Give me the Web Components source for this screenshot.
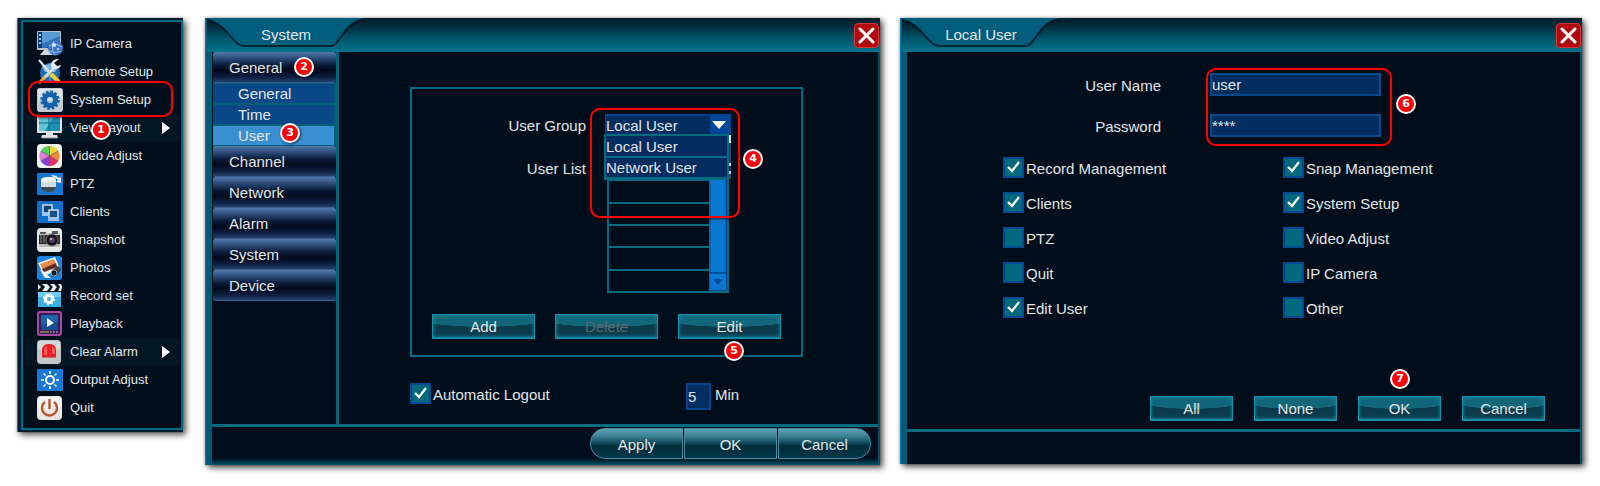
<!DOCTYPE html>
<html lang="en">
<head>
<meta charset="utf-8">
<title>DVR user setup guide</title>
<style>
  body { margin: 0; background: #fff; font-family: "Liberation Sans", Arial, sans-serif; font-size: 15px; line-height: 18px; color: #e4e6e8; }
</style>
</head>
<body>
<guide-page></guide-page>

<script>
const define = (name, html, setup) => {
  const template = document.createElement('template');
  template.innerHTML = html;
  customElements.define(name, class extends HTMLElement {
    constructor() {
      super();
      this.attachShadow({ mode: 'open' }).append(template.content.cloneNode(true));
    }
    connectedCallback() {
      if (setup && !this.ready) { this.ready = true; setup(this, this.shadowRoot); }
    }
  });
};
const base = '*{box-sizing:border-box} button,input,select{font:inherit;color:inherit;margin:0}';

/* Numbered step marker */
define('step-badge', `<style>${base}
  :host{position:absolute;z-index:5;display:grid;place-items:center;box-sizing:border-box;width:20px;height:20px;border:2px solid #fff;border-radius:50%;background:#fb0007;color:#fff;font:bold 11px/16px "DejaVu Sans",sans-serif;box-shadow:1px 1px 3px rgba(0,0,0,.7);pointer-events:none}
</style><slot></slot>`);

/* Red outline round a highlighted area */
define('focus-frame', `<style>
  :host{position:absolute;z-index:4;box-sizing:border-box;border:2px solid #ff0000;border-radius:10px;box-shadow:0 0 1px #f00,0 1px 3px rgba(0,0,0,.6);pointer-events:none}
</style>`);

const icons = {
  camera: `<rect x="0" y="0" width="24" height="19" rx="1" fill="#b9c3cc"/><rect x="1" y="1" width="22" height="16" fill="#0b3a6c"/><path d="M5 1h18v9L9 17H5z" fill="#2e74b8"/><path d="M5 1h18v4L7 12H5z" fill="#5b9bd2"/><path d="M2 3h2v2H2zM2 7h2v2H2zM2 11h2v2H2z" fill="#7fd1ff"/><path d="M7 19h10l2 5H3z" fill="#cfd6dc"/><circle cx="18.500" cy="17" r="7.500" fill="#3e74c4"/><path d="M12 15q6-4 13 1M12 20q7 3 12 0M17 10q-4 7 1 14" fill="none" stroke="#8fbdf2"/><circle cx="17" cy="14" r="2" fill="#cfe8ff"/><circle cx="21" cy="18" r="1" fill="#d8ecff"/>`,
  tools: `<circle cx="13" cy="14" r="10" fill="#1f6cae"/><path d="M5 8q8-6 16 0l-3 5H8z" fill="#7fb9e2"/><path d="M5 20q8-6 16 0M13 4v20" fill="none" stroke="#62b5ea"/><path d="M2 1l11 13" stroke="#e8edf0" stroke-width="2"/><path d="M14 15l8 8" stroke="#f3cf35" stroke-width="4"/><path d="M6 20L18 8" stroke="#d3dbe0" stroke-width="3"/><path d="M22 0q-7 0-8 5q0 5 4 5q5 0 6-4l-4 1-3-3z" fill="#e9eef2"/><path d="M2 24l6-6" stroke="#e7ac2a" stroke-width="3"/>`,
  gear: `<rect x="0" y="1" width="26" height="24" rx="3" fill="#c6cdd2"/><rect x="1" y="2" width="24" height="11" rx="2" fill="#dde2e5"/><circle cx="13" cy="13" r="5.500" fill="none" stroke="#1364ad" stroke-width="5"/><circle cx="13" cy="13" r="8.500" fill="none" stroke="#1364ad" stroke-width="2.500" stroke-dasharray="2.700 1.750"/>`,
  monitor: `<rect x="0" y="0" width="25" height="18" rx="1" fill="#dfe6ea"/><rect x="2" y="2" width="21" height="14" fill="#1f8fb0"/><path d="M2 2h14L8 16H2z" fill="#5fc4d8"/><path d="M12 2v14M2 8h21" stroke="#156a90"/><path d="M9 18h7v2h4l1 3H4l1-3h4z" fill="#e2e5e7"/><path d="M5 23h15" stroke="#8d969c"/>`,
  wheel: `<rect x="0" y="1" width="25" height="24" rx="4" fill="#f0f0ee"/><g transform="translate(12.500 13)"><path d="M0 0L0-10A10 10 0 0 1 8.700-5z" fill="#f0d13e"/><path d="M0 0L8.700-5A10 10 0 0 1 8.700 5z" fill="#f08a3a"/><path d="M0 0L8.700 5A10 10 0 0 1 0 10z" fill="#e0345e"/><path d="M0 0L0 10A10 10 0 0 1-8.700 5z" fill="#8a3fd0"/><path d="M0 0L-8.700 5A10 10 0 0 1-8.700-5z" fill="#e37bd6"/><path d="M0 0L-8.700-5A10 10 0 0 1 0-10z" fill="#52d455"/><path d="M0-10V10M-8.700-5L8.700 5M-8.700 5L8.700-5" stroke="#444" stroke-width=".6"/></g>`,
  dome: `<rect x="0" y="2" width="26" height="22" rx="1" fill="#1777d2"/><path d="M4 9q1-3 6-3h5q4 1 4 3v2H4z" fill="#f5f7f8"/><path d="M4 11h15v5H4z" fill="#d8dde1"/><path d="M4 16h15q-1 5-7.500 5T4 16z" fill="#3b4a58"/><path d="M14 4q5 0 8 3l2-1v6l-5-1 2-2q-2-2-5-3z" fill="#eef5fb"/>`,
  clients: `<rect x="0" y="2" width="26" height="22" rx="1" fill="#126dc6"/><g stroke="#e6f1fa" stroke-width="1.300"><rect x="6" y="6" width="9" height="8" fill="#12406f"/><path d="M5 16h6"/><rect x="12" y="11" width="9" height="8" fill="#194f86"/><path d="M11 21h11"/></g>`,
  photo: `<rect x="0" y="1" width="25" height="24" rx="4" fill="#e9e9e7"/><path d="M2 6h21v4H2z" fill="#c6c7c6"/><path d="M3 5h6v2H3zM15 4h6v3h-6z" fill="#55585a"/><path d="M2 8h21v9H2z" fill="#26282b"/><path d="M4 8v8M7 8v8" stroke="#8c8e90"/><path d="M2 17h21v3H2z" fill="#bcbcbb"/><circle cx="15" cy="13" r="6" fill="#111" stroke="#777"/><circle cx="15" cy="13" r="3" fill="#5b3b6b"/><circle cx="14" cy="12" r="1" fill="#ddd"/>`,
  pictures: `<rect x="0" y="1" width="25" height="24" rx="3" fill="#1b82dd"/><path d="M1 8L18 2l5 12L7 21z" fill="#f2f5f7"/><path d="M3 9l14-5 3 8L7 17z" fill="#e98a4a"/><path d="M5 14l14-6 1 4L7 17z" fill="#5d2a25"/><path d="M3 15l5 8h6l-8-7z" fill="#eef1f3"/><path d="M15 15l6-4 3 3-4 7-6 1z" fill="#3b3f45"/><circle cx="17" cy="18" r="3" fill="#15181c" stroke="#9aa"/>`,
  record: `<rect x="1" y="9" width="23" height="15" rx="1" fill="#39b1e4"/><path d="M1 9h23v5H1z" fill="#6bcbf0"/><rect x="1" y="1" width="24" height="7" fill="#0b1219"/><path d="M5 1h5l3 3-3 4H5l3-4zM13 1h4l3 3-3 4h-4l3-4zM21 1h3l1 3-1 4h-3l2-4zM1 1l3 3-3 3z" fill="#eef2f4"/><circle cx="12" cy="16" r="3.500" fill="none" stroke="#fff" stroke-width="3"/><circle cx="12" cy="16" r="5.200" fill="none" stroke="#fff" stroke-width="1.500" stroke-dasharray="2 2.080"/>`,
  play: `<rect x="1" y="1" width="23" height="23" rx="2" fill="#3a1c55" stroke="#a84a9f" stroke-width="2"/><rect x="4" y="4" width="17" height="15" fill="#134e96"/><path d="M4 4h17v6L4 14z" fill="#1d63ae"/><path d="M10 7l7 5-7 4z" fill="#fff"/><path d="M3 21h9" stroke="#b8c837"/><path d="M13 21h9" stroke="#c7b6d6" stroke-dasharray="2 1"/>`,
  alarm: `<rect x="0" y="1" width="24" height="24" rx="4" fill="#c4c5c7"/><rect x="1" y="2" width="22" height="9" rx="3" fill="#d6d7d8"/><path d="M5 18v-8q1-5 7-5t7 5v8z" fill="#f01c26"/><path d="M7 16v-5q1-3 3-4v9zM15 7q3 1 3 4v4h-3z" fill="#ff5a5e"/><path d="M5 18h14" stroke="#c22"/>`,
  sun: `<rect x="0" y="2" width="26" height="22" rx="1" fill="#1878d4"/><circle cx="13" cy="13" r="4" fill="none" stroke="#fff" stroke-width="2"/><path d="M13 4v3M13 19v3M4 13h3M19 13h3M6.500 6.500l2 2M17.500 17.500l2 2M6.500 19.500l2-2M17.500 8.500l2-2" stroke="#fff" stroke-width="1.600"/>`,
  power: `<rect x="0" y="1" width="25" height="24" rx="4" fill="#e9e7e5"/><rect x="1" y="2" width="23" height="11" rx="3" fill="#f5f4f3"/><path d="M8 7A7.500 7.500 0 1 0 17 7" fill="none" stroke="#b9552c" stroke-width="2.400"/><path d="M12.500 4v10" stroke="#b9552c" stroke-width="2.400"/>`
};

define('menu-entry', `<style>${base}
  :host{display:block;position:relative}
  button{display:flex;align-items:center;width:100%;height:28px;padding:0 9px 0 12px;border:0;background:none;text-align:left;font-size:13px;line-height:16px}
  :host([submenu]) button{background:#001625}
  .icon{flex:none;width:26px;height:26px;margin-right:7px}
  .text{flex:1;white-space:nowrap}
  .arrow{display:none;width:8px;height:12px}
  :host([submenu]) .arrow{display:block}
</style>
<button type="button"><svg class="icon" viewBox="0 0 26 26" aria-hidden="true"></svg><span class="text"><slot></slot></span><svg class="arrow" viewBox="0 0 8 12"><path d="M0 0l8 6-8 6z" fill="#fff"/></svg></button><slot name="mark"></slot>`,
(host, root) => { root.querySelector('.icon').innerHTML = icons[host.getAttribute('icon')]; });

define('setup-menu', `<style>${base}
  :host{display:block;padding:2px 0 2px 3px;background:#001d33;border-left:1px solid #0873b5;box-sizing:border-box;box-shadow:3px 3px 6px rgba(0,0,0,.65),0 0 2px #bbb}
  nav{border:2px solid #006a80;padding:8px 2px 6px 2px;background:#000e1c}
</style><nav aria-label="Main menu"><slot></slot></nav>`);

/* Framed window: title tab, close button, body and footer */
define('nvr-window', `<style>${base}
  :host{display:block;box-sizing:border-box;background:#000e1c;border-left:1px solid #0874b0;box-shadow:3px 3px 6px rgba(0,0,0,.65),0 0 3px #aaa}
  .shell{border-left:6px solid #005c76;border-right:2px solid #004f66}
  header{position:relative;display:flex;justify-content:space-between;align-items:center;height:34px;margin:0 -2px 0 -5px;background:linear-gradient(#001d2b 0,#002d3d 25%,#005a70 65%,#00728a 100%)}
  .tab{position:relative;width:158px;height:34px}
  .tab svg{display:block;width:158px;height:34px}
  h2{position:absolute;inset:8px 0 auto 0;margin:0;font-size:15px;line-height:18px;font-weight:400;text-align:center}
  .close{display:grid;place-items:center;width:25px;height:25px;margin-right:1px;padding:0;border:1px solid #d8343c;border-radius:4px;background:#b00a10}
  footer{border-top:3px solid #006c82}
</style>
<div class="shell">
<header><div class="tab"><svg viewBox="0 0 158 34" aria-hidden="true"><path d="M0 3C20 5 26 28 37 28H124C133 28 137 4 158 2" fill="none" stroke="#001822" stroke-width="2" opacity=".8"/><path d="M0 0V1C20 4 26 26 36 26H124C132 26 136 3 158 0z" fill="#005d7c"/></svg><h2></h2></div>
<button class="close" type="button" aria-label="Close"><svg width="17" height="17" viewBox="0 0 17 17"><path d="M2 2l13 13M15 2L2 15" stroke="#fff" stroke-width="3" stroke-linecap="round"/></svg></button></header>
<slot></slot><footer><slot name="footer"></slot></footer></div>`,
(host, root) => { root.querySelector('h2').textContent = host.getAttribute('heading'); });

define('side-item', `<style>${base}
  :host{display:block;position:relative}
  button{display:block;width:100%;height:31px;padding:2px 16px 0;border:0;border-bottom:1px solid #375f94;border-radius:2px;background:linear-gradient(#5279ab 0,#2a4a78 22%,#0a1935 45%,#020b1e 62%,#0b1c3c 82%,#23406c 100%);text-align:left}
  :host([sub]) button{height:19px;padding:1px 25px 0;border:0;border-radius:0;background:#0a4787}
  :host([active]) button{background:#3a8fd2}
</style><button type="button"><slot></slot></button><slot name="mark"></slot>`);

define('side-group', `<style>:host{display:grid;gap:2px;padding:1px 2px 1px 0;background:#006075}</style><slot></slot>`);

define('glass-button', `<style>${base}
  :host{display:block;position:relative;width:103px}
  :host([compact]){width:83px}
  button{display:block;width:100%;height:25px;padding:1px 0 0;border:1px solid #0f93ad;border-bottom:2px solid #138ca8;background:radial-gradient(ellipse 75% 12px at 50% 0,#12667a 0 97%,transparent 100%),#0a3b4c;box-shadow:inset 0 0 4px #118aa2}
  button:disabled{color:#60676b}
</style><button type="button"><slot></slot></button><slot name="mark"></slot>`,
(host, root) => { root.querySelector('button').disabled = host.hasAttribute('disabled'); });

define('pill-bar', `<style>${base}
  :host{display:flex;justify-content:flex-end;gap:1px;padding:1px 7px 0;height:38px;box-sizing:border-box;background:linear-gradient(#000e1c 31px,#00546a 38px)}
  button{width:93px;height:31px;padding:2px 0 0;border:1px solid #4a90a2;background:linear-gradient(#5fa3b8 0,#3a7f94 25%,#0c4656 50%,#022b3a 58%,#00384a 100%)}
  button:first-of-type{border-radius:15px 0 0 15px}
  button:last-of-type{border-radius:0 15px 15px 0}
</style><button type="button">Apply</button><button type="button">OK</button><button type="button">Cancel</button>`);

define('check-field', `<style>${base}
  :host{display:block}
  label{display:flex;gap:2px;white-space:nowrap}
  input{appearance:none;flex:none;width:21px;height:21px;border:2px solid #004a94;background:#00697e}
  input:checked{background:#00697e url("data:image/svg+xml,%3Csvg xmlns='http://www.w3.org/2000/svg' viewBox='0 0 17 17'%3E%3Cpath d='M3 8l4 4 7-9' fill='none' stroke='white' stroke-width='2.200'/%3E%3C/svg%3E")}
  span{padding-top:3px}
</style><label><input type="checkbox"><span><slot></slot></span></label>`,
(host, root) => { root.querySelector('input').checked = host.hasAttribute('checked'); });

define('text-field', `<style>${base}
  :host{display:block}
  label{display:grid;grid-template-columns:254px 171px;column-gap:49px}
  span{padding-top:4px;text-align:right}
  input{width:100%;height:23px;padding:0;border:2px solid #064a8c;border-radius:0;background:#002e60}
</style><label><span><slot></slot></span><input type="text" autocomplete="off"></label>`,
(host, root) => { root.querySelector('input').value = host.getAttribute('value'); });

/* User group drop-down with its list of choices open */
define('group-select', `<style>${base}
  :host{display:block;position:relative;width:126px;height:20px}
  select{appearance:none;display:block;width:126px;height:20px;padding:1px 0 0;border:2px solid #00438a;border-width:2px 1px 0 1px;border-radius:0;background:linear-gradient(90deg,#002d60 104px,#00479a 104px)}
  .arrow{position:absolute;right:5px;top:7px;pointer-events:none}
  ul{position:absolute;z-index:2;left:-1px;top:20px;width:125px;margin:0;padding:0;list-style:none;border:2px solid #006a80;border-bottom-width:3px;background:#002d60}
  li{height:20px;padding:2px 0 0}
  li + li{height:21px;padding-top:1px;border-top:2px solid #006a80}
  ul::after{content:"";position:absolute;left:123px;top:-1px;width:2px;height:44px;background:linear-gradient(#e6e8ec 8px,#33415c 8px 28px,#c8ccd2 28px 31px,#17304c 31px 36px,#c8ccd2 36px 39px,#33415c 39px)}
</style>
<select aria-label="User Group"><option>Local User</option><option>Network User</option></select>
<svg class="arrow" width="14" height="8" viewBox="0 0 14 8"><path d="M0 0h14L7 8z" fill="#fff"/></svg>
<ul role="listbox"><li role="option">Local User</li><li role="option">Network User</li></ul>`);

define('user-list', `<style>${base}
  :host{display:flex;width:122px;height:136px;border:1px solid #006a80;border-width:0 2px 2px 0}
  table{flex:1;border-collapse:collapse;height:136px}
  td{border:2px solid #006a80;padding:0}
  .bar{display:flex;flex-direction:column;width:17px;margin-left:-1px;padding:0 1px 1px 0;background:#00468c}
  .thumb{flex:1;background:#0a78d2;border:1px solid #0864b8;border-width:0 1px}
  .down{display:grid;place-items:center;height:18px;padding:0;border:0;border-top:2px solid #00509c;background:#0a78d2}
</style>
<table aria-label="Users"><tbody><tr><td></td></tr><tr><td></td></tr><tr><td></td></tr><tr><td></td></tr><tr><td></td></tr><tr><td></td></tr></tbody></table>
<div class="bar"><div class="thumb"></div><button class="down" type="button" aria-label="Scroll down"><svg width="10" height="6" viewBox="0 0 10 6"><path d="M0 0h10L5 6z" fill="#064f96"/></svg></button></div>`);

define('system-settings', `<style>${base}
  :host{display:grid;grid-template-columns:127px 1fr}
  nav{border-right:3px solid #00667c;padding-left:1px}
  main{padding:35px 75px 14px 71px}
  .group{border:2px solid #006a80;padding:25px 10px 16px}
  .row{position:relative;display:grid;grid-template-columns:164px 126px;column-gap:19px}
  .row + .row{margin-top:22px}
  .row > span{padding-top:3px;text-align:right;white-space:nowrap}
  .choice{position:relative}
  .row user-list{margin-left:2px}
  .actions{display:flex;justify-content:center;gap:20px;margin-top:21px}
  .logout{display:flex;margin-top:26px}
  .logout check-field{flex:1;max-width:276px}
  .minutes{display:flex;gap:4px}
  .minutes input{width:25px;height:27px;padding:0;border:2px solid #00468c;border-radius:0;background:#002e60}
  .minutes span{padding-top:3px}
  .b2{left:81px;top:5px}
  .b3{left:67px;top:-3px}
  .b4{left:138px;top:35px}
  .b5{left:46px;top:27px}
  .choices{left:-15px;top:-6px;width:150px;height:110px}
</style>
<nav aria-label="Settings">
  <side-item>General<step-badge slot="mark" class="b2">2</step-badge></side-item>
  <side-group><side-item sub>General</side-item><side-item sub>Time</side-item><side-item sub active>User<step-badge slot="mark" class="b3">3</step-badge></side-item></side-group>
  <side-item>Channel</side-item><side-item>Network</side-item><side-item>Alarm</side-item><side-item>System</side-item><side-item>Device</side-item>
</nav>
<main>
  <div class="group">
    <div class="row"><span>User Group</span><div class="choice"><group-select></group-select><focus-frame class="choices"></focus-frame><step-badge class="b4">4</step-badge></div></div>
    <div class="row"><span>User List</span><user-list></user-list></div>
    <div class="actions"><glass-button>Add</glass-button><glass-button disabled>Delete</glass-button><glass-button>Edit<step-badge slot="mark" class="b5">5</step-badge></glass-button></div>
  </div>
  <div class="logout"><check-field checked>Automatic Logout</check-field><label class="minutes"><input type="text" value="5"><span>Min</span></label></div>
</main>`);

define('user-editor', `<style>${base}
  :host{display:block;padding:21px 35px 8px 0}
  .fields{position:relative;display:grid;gap:18px}
  .rights{display:grid;grid-template-columns:280px 1fr;row-gap:14px;margin-top:20px;padding-left:96px}
  .actions{display:flex;justify-content:flex-end;gap:21px;margin-top:78px}
  .credentials{left:299px;top:-5px;width:186px;height:78px}
  .b6{left:489px;top:21px}
  .b7{left:32px;top:-27px}
</style>
<div class="fields"><text-field value="user">User Name</text-field><text-field value="****">Password</text-field><focus-frame class="credentials"></focus-frame><step-badge class="b6">6</step-badge></div>
<div class="rights">
  <check-field checked>Record Management</check-field><check-field checked>Snap Management</check-field>
  <check-field checked>Clients</check-field><check-field checked>System Setup</check-field>
  <check-field>PTZ</check-field><check-field>Video Adjust</check-field>
  <check-field>Quit</check-field><check-field>IP Camera</check-field>
  <check-field checked>Edit User</check-field><check-field>Other</check-field>
</div>
<div class="actions"><glass-button compact>All</glass-button><glass-button compact>None</glass-button><glass-button compact>OK<step-badge slot="mark" class="b7">7</step-badge></glass-button><glass-button compact>Cancel</glass-button></div>`);

define('guide-page', `<style>${base}
  :host{display:grid;grid-template-columns:166px minmax(697px,697fr) minmax(660px,702fr);align-items:start;padding:18px 18px 18px 17px}
  nvr-window{margin-left:22px}
  nvr-window + nvr-window{margin-left:20px}
  .blank{height:32px}
  .setup{left:3px;top:-5px;width:145px;height:36px}
  .b1{left:66px;top:6px}
</style>
<setup-menu>
  <menu-entry icon="camera">IP Camera</menu-entry>
  <menu-entry icon="tools">Remote Setup</menu-entry>
  <menu-entry icon="gear">System Setup<focus-frame slot="mark" class="setup"></focus-frame></menu-entry>
  <menu-entry icon="monitor" submenu>View Layout<step-badge slot="mark" class="b1">1</step-badge></menu-entry>
  <menu-entry icon="wheel">Video Adjust</menu-entry>
  <menu-entry icon="dome">PTZ</menu-entry>
  <menu-entry icon="clients">Clients</menu-entry>
  <menu-entry icon="photo">Snapshot</menu-entry>
  <menu-entry icon="pictures">Photos</menu-entry>
  <menu-entry icon="record">Record set</menu-entry>
  <menu-entry icon="play">Playback</menu-entry>
  <menu-entry icon="alarm" submenu>Clear Alarm</menu-entry>
  <menu-entry icon="sun">Output Adjust</menu-entry>
  <menu-entry icon="power">Quit</menu-entry>
</setup-menu>
<nvr-window heading="System"><system-settings></system-settings><pill-bar slot="footer"></pill-bar></nvr-window>
<nvr-window heading="Local User"><user-editor></user-editor><div slot="footer" class="blank"></div></nvr-window>`);
</script>
</body>
</html>
